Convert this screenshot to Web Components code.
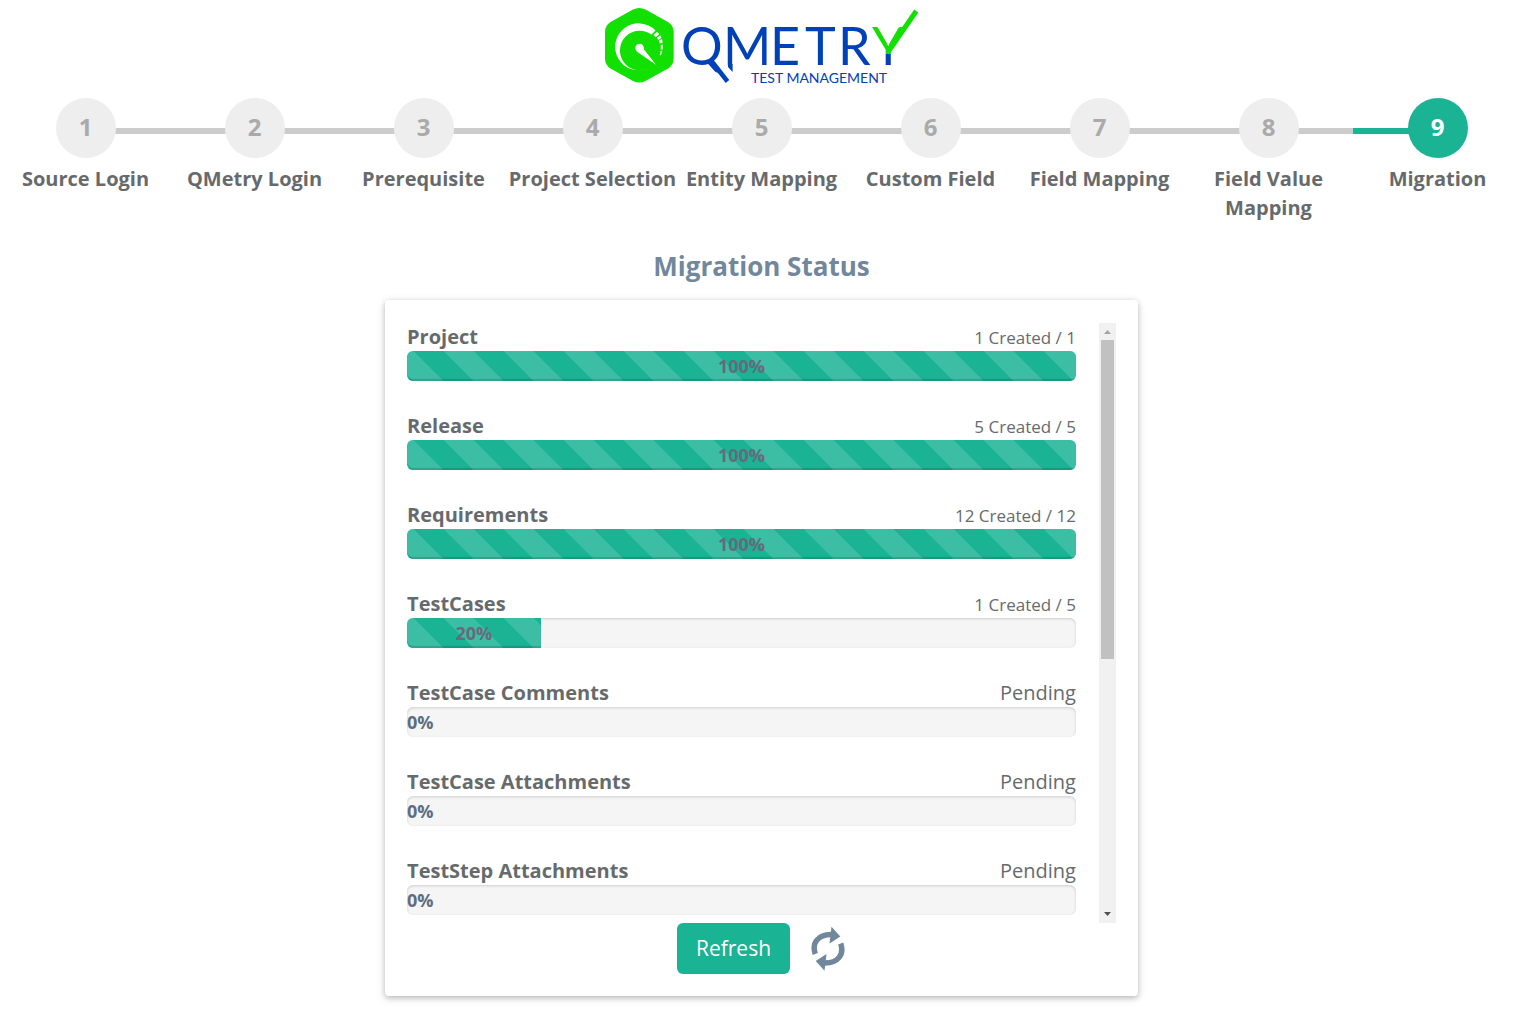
<!DOCTYPE html>
<html lang="en">
<head>
<meta charset="utf-8">
<meta name="viewport" content="width=device-width, initial-scale=1">
<title>QMetry Migration</title>
<style>
  body { margin: 0; background: #fff; color: #676a6c; font: 20px/29px "Open Sans", sans-serif; }
</style>
</head>
<body>
<migration-page></migration-page>
<script>
const define = (name, html, setup) => {
  const template = document.createElement('template');
  template.innerHTML = html;
  customElements.define(name, class extends HTMLElement {
    constructor() {
      super();
      this.attachShadow({ mode: 'open' }).append(template.content.cloneNode(true));
    }
    connectedCallback() { if (setup) setup(this, this.shadowRoot); }
  });
};

define('brand-logo', `
<style>
  :host { display: block; }
  svg { display: block; margin: 0 auto; }
  text { font-family: Lato, sans-serif; fill: #0040b8; }
</style>
<svg width="320" height="90" viewBox="602 0 320 90" role="img" aria-label="QMetry Test Management">
  <defs>
    <linearGradient id="tick" gradientUnits="userSpaceOnUse" x1="0" y1="28" x2="0" y2="66">
      <stop offset="0.68" stop-color="#12e000"/><stop offset="0.68" stop-color="#0040b8"/>
    </linearGradient>
  </defs>
  <path d="M633 9.500Q639.300 6.500 645.500 9.500L668 22Q673.700 25.500 673.700 32V58.500Q673.700 65 668 68.500L645.500 81Q639.300 84 633 81L610.500 68.500Q605 65 605 58.500V32Q605 25.500 610.500 22Z" fill="#12e000"/>
  <path d="M655.500 30.500A23.500 23.500 0 1 0 648.500 68.200A19.800 19.800 0 1 1 651.500 34.500Z" fill="#fff"/>
  <g fill="#fff">
    <path d="M657 31.800L659.300 34L655.800 37.300L653.500 35Z"/>
    <path d="M660.200 35.300L661.500 37.800L658.500 40L657 37.800Z"/>
    <path d="M662 39L662.600 42.800L659.800 43.600L659 40.600Z"/>
    <path d="M662.700 44.500V49.500H660.800V44.900Z"/>
    <path d="M662.400 51L660.800 55.500L659.800 55L660.700 50.800Z"/>
    <path d="M636.600 51.600L641.500 46.200L656 64.800Z"/>
    <circle cx="639.600" cy="48" r="4.300"/>
  </g>
  <text y="65" font-size="52"><tspan x="681">Q</tspan><tspan x="723">M</tspan><tspan x="770">E</tspan><tspan x="805">T</tspan><tspan x="838">R</tspan><tspan x="872" fill="url(#tick)">Y</tspan></text>
  <path d="M711.500 61L727.500 81.500" fill="none" stroke="#0040b8" stroke-width="4.500"/>
  <path d="M728 64H732.600V72L728 67Z" fill="#0040b8"/>
  <path d="M888 52L916.300 11" fill="none" stroke="#12e000" stroke-width="5"/>
  <text x="751" y="82.500" font-size="14">TEST MANAGEMENT</text>
</svg>`);

define('wizard-step', `
<style>
  :host { display: flex; flex-direction: column; align-items: center; flex: 1 1 0; min-width: 0; text-align: center; font-weight: 700; }
  .rail { align-self: stretch; display: grid; grid-template-columns: 1fr 60px 1fr; }
  .line { height: 6px; margin-top: 30px; background: #ccc; margin-inline: -2px; }
  :host(:first-of-type) .before, :host(:last-of-type) .after { background: none; }
  :host([current]) .before { background: #1ab394; margin-left: 0; }
  .dot { width: 60px; height: 60px; border-radius: 50%; background: #eee; color: #aaa; font-size: 24px; line-height: 58px; z-index: 1; }
  :host([current]) .dot { background: #1ab394; color: #fff; }
  .label { padding-top: 6px; }
</style>
<div class="rail"><span class="line before"></span><span class="dot"></span><span class="line after"></span></div>
<div class="label"><slot></slot></div>`, (el, root) => {
  root.querySelector('.dot').textContent = el.getAttribute('number');
  if (el.hasAttribute('current')) el.setAttribute('aria-current', 'step');
});

define('wizard-steps', `
<style>:host { display: flex; padding-top: 8px; }</style><slot></slot>`);

define('entity-progress', `
<style>
  :host { display: block; margin-bottom: 31px; }
  .head { display: flex; justify-content: space-between; align-items: baseline; height: 28px; line-height: 28px; }
  .name { font-weight: 700; }
  .created { font-size: 17px; }
  .track { height: 30px; border-radius: 6px; background: #f5f5f5; overflow: hidden; box-shadow: inset 0 1px 3px rgba(0,0,0,.16); }
  .fill { height: 30px; text-align: center; font-size: 18px; line-height: 30px; font-weight: 700; color: #5e6d80; }
  .fill.on {
    background: linear-gradient(45deg, rgba(255,255,255,.15) 25%, transparent 25%, transparent 50%, rgba(255,255,255,.15) 50%, rgba(255,255,255,.15) 75%, transparent 75%) -23px 0 / 60px 60px #1ab394;
    box-shadow: inset 0 -2px 1px rgba(0,0,0,.15);
    color: #676a7c;
  }
</style>
<div class="head"><span class="name" id="name"></span><span class="state"><slot></slot></span></div>
<div class="track" role="progressbar" aria-labelledby="name" aria-valuemin="0" aria-valuemax="100"><div class="fill"></div></div>`, (el, root) => {
  const value = Number(el.getAttribute('value'));
  const fill = root.querySelector('.fill');
  root.querySelector('.name').textContent = el.getAttribute('name');
  root.querySelector('.track').setAttribute('aria-valuenow', value);
  fill.textContent = value + '%';
  fill.style.width = value ? value + '%' : 'max-content';
  fill.classList.toggle('on', value > 0);
  root.querySelector('.state').classList.toggle('created', value > 0);
});

define('scroll-panel', `
<style>
  :host { display: grid; grid-template-columns: 1fr 17px; gap: 23px; height: 600px; }
  .view { overflow-y: auto; scrollbar-width: none; }
  .bar { display: flex; flex-direction: column; background: #f1f1f1; }
  svg { display: block; width: 17px; height: 17px; flex: none; }
  .rail { flex: 1; padding: 0 2px; }
  .thumb { height: 56.4%; background: #c1c1c1; }
</style>
<div class="view"><slot></slot></div>
<div class="bar" aria-hidden="true">
  <svg viewBox="0 0 17 17"><path d="M5 11L8.500 7L12 11Z" fill="#a3a3a3"/></svg>
  <div class="rail"><div class="thumb"></div></div>
  <svg viewBox="0 0 17 17"><path d="M5 6L8.500 10L12 6Z" fill="#505050"/></svg>
</div>`);

define('refresh-action', `
<style>
  :host { display: flex; justify-content: center; align-items: center; gap: 20px; }
  button { border: 0; border-radius: 6px; background: #1ab394; color: #fff; font: 21px/29px "Open Sans", sans-serif; padding: 11px 19px; cursor: pointer; }
  svg { display: block; }
</style>
<button type="button"><slot></slot></button>
<svg width="36" height="45" viewBox="811 926 36 45" aria-hidden="true">
  <g fill="none" stroke="#71879c" stroke-width="5.500">
    <path d="M816.300 954C812.500 943 819 934.500 832 934.500"/>
    <path d="M841.700 943.500C845.500 954.500 839 963 826 963"/>
  </g>
  <path d="M832.500 926.700L841.300 936.500L830.500 943.500ZM825.500 970.800L816.700 961L827.500 954Z" fill="#71879c"/>
</svg>`);

define('status-card', `
<style>
  :host { display: block; width: 49.5%; margin: 0 auto; box-sizing: border-box; padding: 23px 22px 22px; border-radius: 4px; background: #fff; box-shadow: 0 2px 10px rgba(0,0,0,.16), 0 2px 5px rgba(0,0,0,.16); }
</style>
<slot></slot>`);

define('migration-page', `
<style>
  :host { display: block; padding: 0 0 19px 1px; }
  h1 { margin: 25px 0 15px; text-align: center; font-size: 26px; line-height: 38px; font-weight: 700; color: #71879c; }
</style>
<brand-logo></brand-logo>
<wizard-steps>
  <wizard-step number="1">Source Login</wizard-step>
  <wizard-step number="2">QMetry Login</wizard-step>
  <wizard-step number="3">Prerequisite</wizard-step>
  <wizard-step number="4">Project Selection</wizard-step>
  <wizard-step number="5">Entity Mapping</wizard-step>
  <wizard-step number="6">Custom Field</wizard-step>
  <wizard-step number="7">Field Mapping</wizard-step>
  <wizard-step number="8">Field Value Mapping</wizard-step>
  <wizard-step number="9" current>Migration</wizard-step>
</wizard-steps>
<h1>Migration Status</h1>
<status-card>
  <scroll-panel>
    <entity-progress name="Project" value="100">1 Created / 1</entity-progress>
    <entity-progress name="Release" value="100">5 Created / 5</entity-progress>
    <entity-progress name="Requirements" value="100">12 Created / 12</entity-progress>
    <entity-progress name="TestCases" value="20">1 Created / 5</entity-progress>
    <entity-progress name="TestCase Comments" value="0">Pending</entity-progress>
    <entity-progress name="TestCase Attachments" value="0">Pending</entity-progress>
    <entity-progress name="TestStep Attachments" value="0">Pending</entity-progress>
  </scroll-panel>
  <refresh-action>Refresh</refresh-action>
</status-card>`);
</script>
</body>
</html>
